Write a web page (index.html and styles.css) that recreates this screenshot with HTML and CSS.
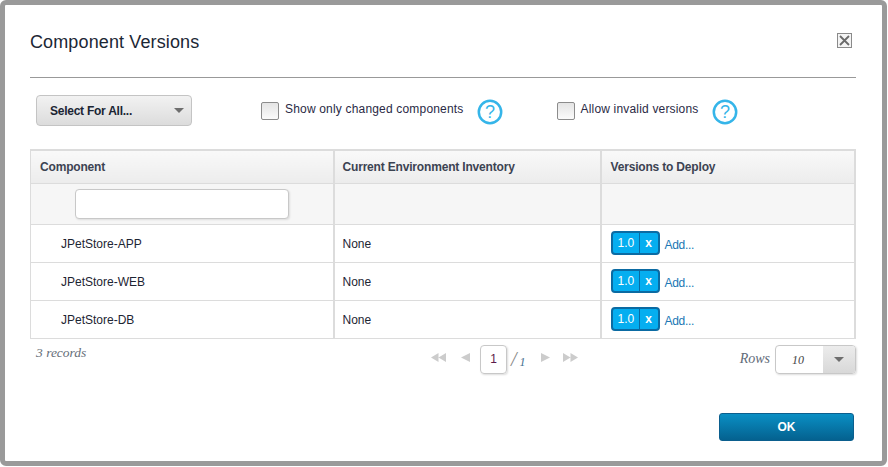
FILE: index.html
```html
<!DOCTYPE html>
<html lang="en">
  <head>
    <meta charset="UTF-8" />
    <title>Component Versions</title>
    <link rel="stylesheet" href="styles.css">
  </head>
  <body>
    <div class="dialog">
      <!-- Title -->
      <div class="dialog-head">
        <h1>Component Versions</h1>
        <svg class="close-icon" width="15" height="15" viewBox="0 0 15 15">
          <rect x="0.5" y="0.5" width="14" height="14" fill="#f4f4f4" stroke="#8a8a8a" />
          <path d="M3 3L12 12M12 3L3 12" stroke="#6a6a6a" stroke-width="1.8" fill="none" />
        </svg>
      </div>

      <!-- Options -->
      <div class="toolbar">
        <div class="select-all">
          <span>Select For All...</span>
          <i class="caret"></i>
        </div>
        <div class="option option-changed">
          <span class="checkbox"></span>
          <span class="option-label">Show only changed components</span>
          <svg class="help" width="26" height="26" viewBox="0 0 26 26">
            <circle cx="13" cy="13" r="11.2" fill="#fff" stroke="#35b5e9" stroke-width="2.5" />
            <text x="13" y="19" text-anchor="middle" class="help-mark">?</text>
          </svg>
        </div>
        <div class="option option-invalid">
          <span class="checkbox"></span>
          <span class="option-label">Allow invalid versions</span>
          <svg class="help" width="26" height="26" viewBox="0 0 26 26">
            <circle cx="13" cy="13" r="11.2" fill="#fff" stroke="#35b5e9" stroke-width="2.5" />
            <text x="13" y="19" text-anchor="middle" class="help-mark">?</text>
          </svg>
        </div>
      </div>

      <!-- Versions table -->
      <table class="versions">
        <thead>
          <tr>
            <th class="col-component">Component</th>
            <th class="col-inventory">Current Environment Inventory</th>
            <th>Versions to Deploy</th>
          </tr>
        </thead>
        <tbody>
          <tr class="filter-row">
            <td><div class="filter-input"></div></td>
            <td></td>
            <td></td>
          </tr>
          <tr>
            <td class="name">JPetStore-APP</td>
            <td class="inventory">None</td>
            <td><div class="deploy"><span class="version"><b>1.0</b><b class="remove">x</b></span><a class="add">Add...</a></div></td>
          </tr>
          <tr>
            <td class="name">JPetStore-WEB</td>
            <td class="inventory">None</td>
            <td><div class="deploy"><span class="version"><b>1.0</b><b class="remove">x</b></span><a class="add">Add...</a></div></td>
          </tr>
          <tr>
            <td class="name">JPetStore-DB</td>
            <td class="inventory">None</td>
            <td><div class="deploy"><span class="version"><b>1.0</b><b class="remove">x</b></span><a class="add">Add...</a></div></td>
          </tr>
        </tbody>
      </table>

      <!-- Paging -->
      <div class="pager-row">
        <span class="records">3 records</span>
        <div class="pager">
          <svg width="15" height="9" viewBox="0 0 16 10" preserveAspectRatio="none"><path d="M8 0V10L0 5ZM16 0V10L8 5Z" fill="#ccc" /></svg>
          <svg class="prev" width="9" height="9" viewBox="0 0 8 10" preserveAspectRatio="none"><path d="M8 0V10L0 5Z" fill="#ccc" /></svg>
          <span class="page-box">1</span>
          <span class="page-total"><span class="slash">/</span> 1</span>
          <svg class="next" width="9" height="9" viewBox="0 0 8 10" preserveAspectRatio="none"><path d="M0 0V10L8 5Z" fill="#ccc" /></svg>
          <svg width="15" height="9" viewBox="0 0 16 10" preserveAspectRatio="none"><path d="M0 0V10L8 5ZM8 0V10L16 5Z" fill="#ccc" /></svg>
        </div>
        <div class="rows">
          <span class="rows-label">Rows</span>
          <div class="rows-select">
            <span class="rows-value">10</span>
            <span class="rows-arrow"><i class="caret"></i></span>
          </div>
        </div>
      </div>

      <div class="dialog-foot">
        <button class="ok">OK</button>
      </div>
    </div>
  </body>
</html>
```

FILE: styles.css
```css
/* Global Styles */
html, body {
  margin: 0;
  background: #fff;
}

body {
  font-family: "Liberation Sans", Arial, sans-serif;
  font-size: 12px;
  color: #1d2533;
  width: 888px;
  height: 467px;
  overflow: hidden;
}

.dialog {
  box-sizing: border-box;
  width: 887px;
  height: 466px;
  border: 5px solid #9a9a9a;
  border-radius: 6px;
  background: #fff;
  padding: 0 26px 0 25px;
}

/* Title */
.dialog-head {
  display: flex;
  justify-content: space-between;
  align-items: center;
  height: 72px;
  border-bottom: 1px solid #999;
}

h1 {
  margin: 3px 0 0;
  font-size: 18px;
  font-weight: normal;
  letter-spacing: 0.12px;
  color: #1c2735;
}

.close-icon {
  margin: 0 4px 2px 0;
}

/* Options */
.toolbar {
  display: flex;
  height: 71px;
  padding: 17px 0 0 6px;
  box-sizing: border-box;
}

.select-all {
  box-sizing: border-box;
  width: 156px;
  height: 31px;
  display: flex;
  justify-content: space-between;
  align-items: center;
  padding: 0 7px 0 13px;
  border: 1px solid #c4c4c4;
  border-radius: 4px;
  background: linear-gradient(#f2f2f2, #dcdcdc);
  font-size: 12px;
  font-weight: bold;
  letter-spacing: -0.25px;
  color: #1a2433;
}

.caret {
  display: block;
  width: 0;
  height: 0;
  border-left: 5px solid transparent;
  border-right: 5px solid transparent;
  border-top: 5px solid #6e6e6e;
}

.option {
  display: flex;
  align-items: flex-start;
}

.option-changed {
  margin-left: 69px;
}

.option-invalid {
  margin-left: 54px;
}

.checkbox {
  box-sizing: border-box;
  width: 18px;
  height: 18px;
  margin-top: 7px;
  border: 1px solid #8c8c8c;
  border-radius: 2px;
  background: linear-gradient(#e4e4e4, #fbfbfb);
}

.option-label {
  margin: 7px 0 0 6px;
  line-height: 14px;
  letter-spacing: 0.18px;
  color: #2a2a45;
}

.help {
  margin: 4px 0 0 13px;
}

.help-mark {
  font-family: "Liberation Sans", Arial, sans-serif;
  font-size: 18px;
  fill: #35b5e9;
}

/* Table Styling */
.versions {
  border-collapse: collapse;
  table-layout: fixed;
  width: 826px;
  border-style: solid;
  border-color: #dcdcdc;
  border-width: 2px 2px 1px 1px;
}

.versions th,
.versions td {
  border: 1px solid #dcdcdc;
  padding: 0 0 0 8px;
  text-align: left;
  height: 38px;
  box-sizing: border-box;
}

.versions th {
  height: 33px;
  background: linear-gradient(#f9f9f9, #ececec);
  font-size: 12px;
  font-weight: bold;
  color: #3c4352;
  letter-spacing: -0.18px;
}

.versions th + th,
.versions td + td {
  border-left: 2px solid #dcdcdc;
}

.versions th:first-child {
  padding-left: 9px;
}

.versions th:last-child,
.versions td:last-child {
  padding-left: 9px;
}

.col-component {
  width: 303px;
}

.col-inventory {
  width: 267px;
}

.versions .filter-row td {
  height: 41px;
  background: #f6f6f6;
}

.filter-input {
  box-sizing: border-box;
  width: 214px;
  height: 30px;
  margin-left: 36px;
  background: #fff;
  border: 1px solid #c8c8c8;
  border-radius: 4px;
  box-shadow: 1px 1px 2px #ddd;
}

.versions td.name {
  padding: 2px 0 0 30px;
}

.versions td.inventory {
  padding-top: 2px;
}

.deploy {
  display: flex;
  align-items: center;
}

.version {
  display: flex;
  box-sizing: border-box;
  height: 24px;
  border: 2px solid #0b6ba3;
  border-radius: 4px;
  background: #05aef0;
  color: #fff;
  line-height: 21px;
}

.version b {
  font-weight: normal;
  padding: 0 5px;
  width: 16px;
  text-align: center;
}

.version .remove {
  width: 8px;
  font-weight: bold;
  border-left: 1px solid #0b6ba3;
}

.add {
  margin: 4px 0 0 5px;
  letter-spacing: -0.3px;
  color: #2077b4;
}

/* Paging */
.pager-row {
  display: flex;
  align-items: flex-start;
  height: 74px;
}

.records {
  width: 60px;
  margin: 6px 0 0 6px;
  font-family: "Liberation Serif", serif;
  font-style: italic;
  font-size: 13.5px;
  color: #666e78;
}

.pager {
  display: flex;
  align-items: center;
  margin: 6px 0 0 335px;
  height: 29px;
}

.pager svg {
  margin-top: -4px;
}

.prev {
  margin-left: 15px;
  margin-right: 10px;
}

.next {
  margin-right: 13px;
}

.page-box {
  box-sizing: border-box;
  width: 27px;
  height: 29px;
  line-height: 27px;
  text-align: center;
  border: 1px solid #c8c8c8;
  border-radius: 4px;
  box-shadow: 1px 1px 2px #ddd;
  color: #5b1a4a;
}

.page-total {
  width: 30px;
  margin-left: 4px;
  font-family: "Liberation Serif", serif;
  font-style: italic;
  font-size: 12px;
  color: #45708f;
}

.slash {
  font-size: 20px;
  color: #8a8a8a;
}

.rows {
  display: flex;
  margin-left: auto;
  padding-top: 6px;
}

.rows-label {
  margin: 6px 5px 0 0;
  font-family: "Liberation Serif", serif;
  font-style: italic;
  font-size: 14px;
  color: #5f6b78;
}

.rows-select {
  box-sizing: border-box;
  display: flex;
  width: 81px;
  height: 29px;
  border: 1px solid #c8c8c8;
  border-radius: 4px;
  box-shadow: 1px 1px 2px #ddd;
  overflow: hidden;
}

.rows-value {
  box-sizing: border-box;
  width: 47px;
  line-height: 28px;
  padding-left: 16px;
  font-family: "Liberation Serif", serif;
  font-style: italic;
  font-size: 12px;
  color: #444;
}

.rows-arrow {
  flex: 1;
  display: flex;
  align-items: center;
  justify-content: center;
  background: linear-gradient(#ececec, #d8d8d8);
}

/* Footer */
.dialog-foot {
  display: flex;
  justify-content: flex-end;
  padding-right: 2px;
}

.ok {
  width: 135px;
  height: 28px;
  border: 1px solid #0b5f8e;
  border-radius: 3px;
  background: linear-gradient(#0a8fc4, #04618f);
  color: #fff;
  font-family: "Liberation Sans", Arial, sans-serif;
  font-size: 12px;
  font-weight: bold;
}
```
